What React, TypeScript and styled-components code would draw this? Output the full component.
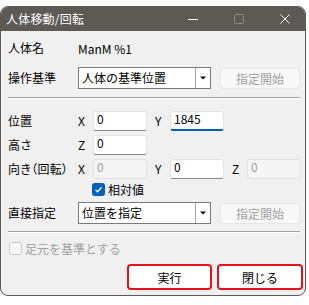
import React from 'react';
import styled, { createGlobalStyle, css } from 'styled-components';

const frameColor = '#5d5a56';
const disabledText = '#a0a0a0';

const GlobalStyle = createGlobalStyle`
  html, body {
    margin: 0;
    padding: 0;
    background: #fff;
  }
  body {
    font-family: "Noto Sans CJK JP", "Noto Sans", sans-serif;
    font-size: 12px;
    color: #000;
  }
`;

const Page = styled.div`
  padding-top: 6px;
`;

const Window = styled.div`
  width: 306px;
  height: 290px;
  box-sizing: border-box;
  border: 1px solid ${frameColor};
  border-radius: 8px;
  overflow: hidden;
  background: #f0f0f0;
  display: flex;
  flex-direction: column;
`;

const TitleBar = styled.div`
  height: 24px;
  flex-shrink: 0;
  background: ${frameColor};
  color: #fff;
  display: flex;
  align-items: center;
  padding-left: 5px;
`;

const Title = styled.div`
  line-height: 16px;
  white-space: nowrap;
  letter-spacing: 0.2px;
`;

const CaptionButtons = styled.div`
  margin-left: auto;
  margin-right: -3px;
  display: flex;
  height: 100%;
`;

const CaptionButton = styled.div`
  width: 46px;
  display: flex;
  align-items: center;
  justify-content: center;
`;

const Body = styled.div`
  flex: 1;
  display: flex;
  flex-direction: column;
  padding: 0 2px 0 7px;
`;

const InfoRow = styled.div`
  display: flex;
  align-items: center;
  height: 16px;
  margin-top: 9px;
`;

const FieldLabel = styled.div`
  width: 70px;
  flex-shrink: 0;
  line-height: 16px;
  white-space: nowrap;
`;

const ControlRow = styled.div<{ $top: number }>`
  display: flex;
  align-items: center;
  height: 22px;
  margin-top: ${(p) => p.$top}px;
`;

const Combo = styled.div`
  width: 133px;
  height: 22px;
  box-sizing: border-box;
  border: 1px solid #7a7a7a;
  background: #fff;
  display: flex;
`;

const ComboText = styled.div`
  flex: 1;
  padding-left: 3px;
  line-height: 19px;
  white-space: nowrap;
`;

const ComboArrow = styled.div`
  width: 14px;
  border-left: 1px solid #a8a8a8;
  display: flex;
  align-items: center;
  justify-content: center;
`;

const GhostButton = styled.div`
  width: 80px;
  height: 21px;
  box-sizing: border-box;
  margin-left: 9px;
  border: 1px solid #e6e6e6;
  border-radius: 4px;
  background: #f8f8f8;
  color: ${disabledText};
  display: flex;
  align-items: center;
  justify-content: center;
`;

const Separator = styled.div<{ $top: number }>`
  margin-top: ${(p) => p.$top}px;
  margin-right: 3px;
  border-top: 1px solid #a0a0a0;
  border-bottom: 1px solid #fff;
`;

const CoordGrid = styled.div`
  display: grid;
  grid-template-columns: 70px 15px 54px 8px 15px 54px 8px 15px 54px;
  grid-auto-rows: 20px;
  row-gap: 4px;
  margin-top: 12px;
  align-items: center;
`;

const GridCell = styled.div<{ $col: number; $tight?: boolean }>`
  grid-column: ${(p) => p.$col};
  line-height: 16px;
  white-space: nowrap;
  ${(p) => p.$tight && css`
    font-feature-settings: "palt";
    letter-spacing: 0.3px;
  `}
`;

const NumberBox = styled.input<{ $col: number; $focused?: boolean }>`
  grid-column: ${(p) => p.$col};
  width: 54px;
  height: 20px;
  box-sizing: border-box;
  margin: 0;
  padding: 0 3px 5px;
  border: 1px solid #e4e4e4;
  border-bottom: 1px solid #868686;
  border-radius: 3px;
  background: #fff;
  font: inherit;
  font-size: 12px;
  color: #000;
  outline: none;
  ${(p) => p.$focused && css`
    border-bottom: 2px solid #005fb8;
    padding-bottom: 4px;
  `}
  &:disabled {
    background: #f5f5f5;
    border-color: #e2e2e2;
    color: ${disabledText};
  }
`;

const CheckRow = styled.div<{ $top: number; $indent: number }>`
  display: flex;
  align-items: center;
  height: 13px;
  margin-top: ${(p) => p.$top}px;
  padding-left: ${(p) => p.$indent}px;
`;

const CheckBox = styled.div<{ $checked?: boolean }>`
  width: 13px;
  height: 13px;
  box-sizing: border-box;
  border-radius: 3px;
  display: flex;
  align-items: center;
  justify-content: center;
  ${(p) => p.$checked
    ? css`
      background: #005fb8;
    `
    : css`
      background: #f7f7f7;
      border: 1px solid #c8c8c8;
    `}
`;

const CheckLabel = styled.span<{ $disabled?: boolean }>`
  margin-left: 3px;
  line-height: 16px;
  white-space: nowrap;
  color: ${(p) => (p.$disabled ? disabledText : '#000')};
`;

const ButtonRow = styled.div`
  display: flex;
  justify-content: flex-end;
  gap: 5px;
  margin-top: 9px;
`;

const ActionButton = styled.div<{ $width: number }>`
  width: ${(p) => p.$width}px;
  height: 26px;
  box-sizing: border-box;
  border: 2px solid #e3131b;
  border-radius: 4px;
  background: #fff;
  display: flex;
  align-items: center;
  justify-content: center;
`;

const DropArrow = () => (
  <svg width="6" height="4" viewBox="0 0 6 4">
    <path d="M0 0.5 H6 L3 3.5 Z" fill="#000" />
  </svg>
);

const App: React.FC = () => (
  <>
    <GlobalStyle />
    <Page>
      <Window>
        <TitleBar>
          <Title>人体移動/回転</Title>
          <CaptionButtons>
            <CaptionButton>
              <svg width="10" height="10" viewBox="0 0 10 10">
                <path d="M0 5.5 H10" stroke="#fff" strokeWidth="1" />
              </svg>
            </CaptionButton>
            <CaptionButton>
              <svg width="10" height="10" viewBox="0 0 10 10">
                <rect x="0.5" y="0.5" width="9" height="9" rx="1" fill="none" stroke="#8c8985" />
              </svg>
            </CaptionButton>
            <CaptionButton>
              <svg width="10" height="10" viewBox="0 0 10 10">
                <path d="M0.5 0.5 L9.5 9.5 M9.5 0.5 L0.5 9.5" stroke="#fff" strokeWidth="1" />
              </svg>
            </CaptionButton>
          </CaptionButtons>
        </TitleBar>
        <Body>
          <InfoRow>
            <FieldLabel>人体名</FieldLabel>
            <span>ManM %1</span>
          </InfoRow>
          <ControlRow $top={11}>
            <FieldLabel>操作基準</FieldLabel>
            <Combo>
              <ComboText>人体の基準位置</ComboText>
              <ComboArrow><DropArrow /></ComboArrow>
            </Combo>
            <GhostButton>指定開始</GhostButton>
          </ControlRow>
          <Separator $top={8} />
          <CoordGrid>
            <GridCell $col={1}>位置</GridCell>
            <GridCell $col={2}>X</GridCell>
            <NumberBox $col={3} defaultValue="0" />
            <GridCell $col={5}>Y</GridCell>
            <NumberBox $col={6} defaultValue="1845" $focused />

            <GridCell $col={1}>高さ</GridCell>
            <GridCell $col={2}>Z</GridCell>
            <NumberBox $col={3} defaultValue="0" />

            <GridCell $col={1} $tight>向き（回転）</GridCell>
            <GridCell $col={2}>X</GridCell>
            <NumberBox $col={3} defaultValue="0" disabled />
            <GridCell $col={5}>Y</GridCell>
            <NumberBox $col={6} defaultValue="0" />
            <GridCell $col={8}>Z</GridCell>
            <NumberBox $col={9} defaultValue="0" disabled />
          </CoordGrid>
          <CheckRow $top={4} $indent={84}>
            <CheckBox $checked>
              <svg width="9" height="9" viewBox="0 0 9 9">
                <path d="M1.5 4.8 L3.6 6.8 L7.6 2.2" fill="none" stroke="#fff" strokeWidth="1.3" />
              </svg>
            </CheckBox>
            <CheckLabel>相対値</CheckLabel>
          </CheckRow>
          <ControlRow $top={6}>
            <FieldLabel>直接指定</FieldLabel>
            <Combo>
              <ComboText>位置を指定</ComboText>
              <ComboArrow><DropArrow /></ComboArrow>
            </Combo>
            <GhostButton>指定開始</GhostButton>
          </ControlRow>
          <Separator $top={7} />
          <CheckRow $top={9} $indent={1}>
            <CheckBox />
            <CheckLabel $disabled>足元を基準とする</CheckLabel>
          </CheckRow>
          <ButtonRow>
            <ActionButton $width={85}>実行</ActionButton>
            <ActionButton $width={86}>閉じる</ActionButton>
          </ButtonRow>
        </Body>
      </Window>
    </Page>
  </>
);

export default App;
